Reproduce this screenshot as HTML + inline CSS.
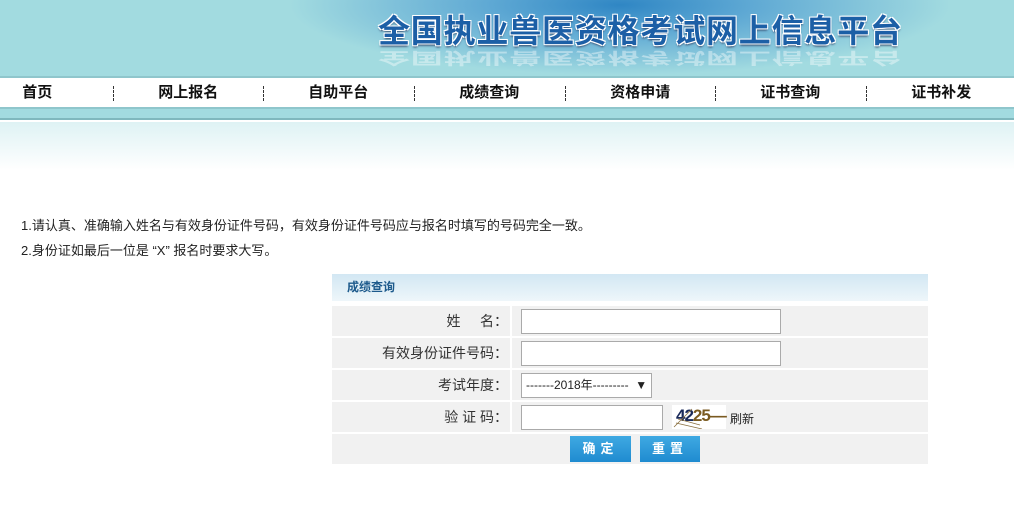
<!DOCTYPE html>
<html><head><meta charset="utf-8"><style>
*{margin:0;padding:0;box-sizing:border-box}
body{width:1014px;height:508px;overflow:hidden;background:#fff;font-family:"Liberation Sans","Noto Sans CJK SC",sans-serif;font-size:12px;color:#222;position:relative}
#hd{position:absolute;left:0;top:0;width:1014px;height:77px;background:#a2dbe0;overflow:hidden}
#hd .glow{position:absolute;left:0;top:0;width:1014px;height:77px;background:radial-gradient(ellipse 330px 70px at 620px 5px,#2f86c4 0%,#5fa9d4 40%,rgba(162,219,224,0) 100%)}
#hd .t{position:absolute;left:378px;top:6px;font-size:32px;font-weight:bold;color:#1c5fa6;letter-spacing:0.8px;white-space:nowrap;text-shadow:-1px -1px 0 #fff,1px -1px 0 #fff,-1px 1px 0 #fff,1px 1px 0 #fff,0 2px 2px #346}
#hd .r{position:absolute;left:378px;top:68px;font-size:32px;font-weight:bold;color:rgba(255,255,255,0.4);letter-spacing:0.8px;white-space:nowrap;transform:scaleY(-0.5);transform-origin:top;line-height:40px}
#nav{position:absolute;left:0;top:76px;width:1014px;height:33px;background:#fff;border-top:2px solid #8fc6cc;border-bottom:2px solid #8fc6cc}
#nav div{position:absolute;top:0;width:150.5px;height:29px;line-height:30px;text-align:center;font-size:15px;font-weight:bold;color:#111}
#nav i{position:absolute;top:8px;height:15px;border-left:1px dashed #333}
#band{position:absolute;left:0;top:109px;width:1014px;height:11px;background:#a2dbe0;border-bottom:2px solid #7fb8be}
#grad{position:absolute;left:0;top:122px;width:1014px;height:48px;background:linear-gradient(#def2f4,#fff)}
.note{position:absolute;left:21px;font-size:13px;color:#222}
#tb{position:absolute;left:332px;top:274px;width:596px}
#tb .h{height:27px;background:linear-gradient(#d2e7f3,#eef6fa);color:#1d5a8c;font-weight:bold;font-size:12px;line-height:27px;padding-left:15px}
.row{position:absolute;left:0;width:596px;height:30px;background:#f1f1f1}
.row .l{position:absolute;left:0;width:176px;height:30px;text-align:right;line-height:30px;font-size:14px;color:#333}
.row .sep{position:absolute;left:178px;width:2px;height:30px;background:#fff}
.inp{position:absolute;top:3px;height:25px;background:#fff;border:1px solid #aaa}
.btn{position:absolute;top:2px;height:26px;width:61px;background:linear-gradient(#3fa9e2,#1f8bd0);color:#fff;font-weight:bold;font-size:13px;text-align:center;line-height:26px;letter-spacing:5px}
</style></head><body>
<div id="hd"><div class="glow"></div><div class="r">全国执业兽医资格考试网上信息平台</div><div class="t">全国执业兽医资格考试网上信息平台</div></div>
<div id="nav">
<div style="left:-38px">首页</div><div style="left:113px">网上报名</div><div style="left:263px">自助平台</div><div style="left:414px">成绩查询</div><div style="left:565px">资格申请</div><div style="left:715px">证书查询</div><div style="left:866px">证书补发</div>
<i style="left:113px"></i><i style="left:263px"></i><i style="left:414px"></i><i style="left:565px"></i><i style="left:715px"></i><i style="left:866px"></i>
</div>
<div id="band"></div><div id="grad"></div>
<div class="note" style="top:215px">1.请认真、准确输入姓名与有效身份证件号码，有效身份证件号码应与报名时填写的号码完全一致。</div>
<div class="note" style="top:240px">2.身份证如最后一位是 “X” 报名时要求大写。</div>
<div id="tb">
<div class="h">成绩查询</div>
<div class="row" style="top:32px"><div class="l">姓&nbsp;&nbsp;&nbsp;&nbsp;&nbsp;名：</div><div class="sep"></div><div class="inp" style="left:189px;width:260px"></div></div>
<div class="row" style="top:64px"><div class="l">有效身份证件号码：</div><div class="sep"></div><div class="inp" style="left:189px;width:260px"></div></div>
<div class="row" style="top:96px"><div class="l">考试年度：</div><div class="sep"></div><div class="inp" style="left:189px;width:131px;font-size:12px;line-height:23px;padding-left:4px">-------2018年---------&nbsp;&nbsp;▼</div></div>
<div class="row" style="top:128px"><div class="l">验 证 码：</div><div class="sep"></div><div class="inp" style="left:189px;width:142px"></div>
<div style="position:absolute;left:340px;top:3px;width:54px;height:24px;background:#fff"><span style="position:absolute;left:4px;top:1px;font-size:17px;font-weight:bold;color:#7a5a20;letter-spacing:-1px"><span style="color:#1a2a5a">42</span>25—</span><svg width="54" height="24" style="position:absolute;left:0;top:0"><path d="M2 22L20 4M4 18L30 24M6 14L28 20" stroke="#8a7040" stroke-width="0.8" fill="none"/></svg></div>
<div style="position:absolute;left:398px;top:8px;font-size:12px">刷新</div></div>
<div class="row" style="top:160px"><div class="btn" style="left:238px">确定</div><div class="btn" style="left:308px;width:60px">重置</div></div>
</div>
</body></html>
